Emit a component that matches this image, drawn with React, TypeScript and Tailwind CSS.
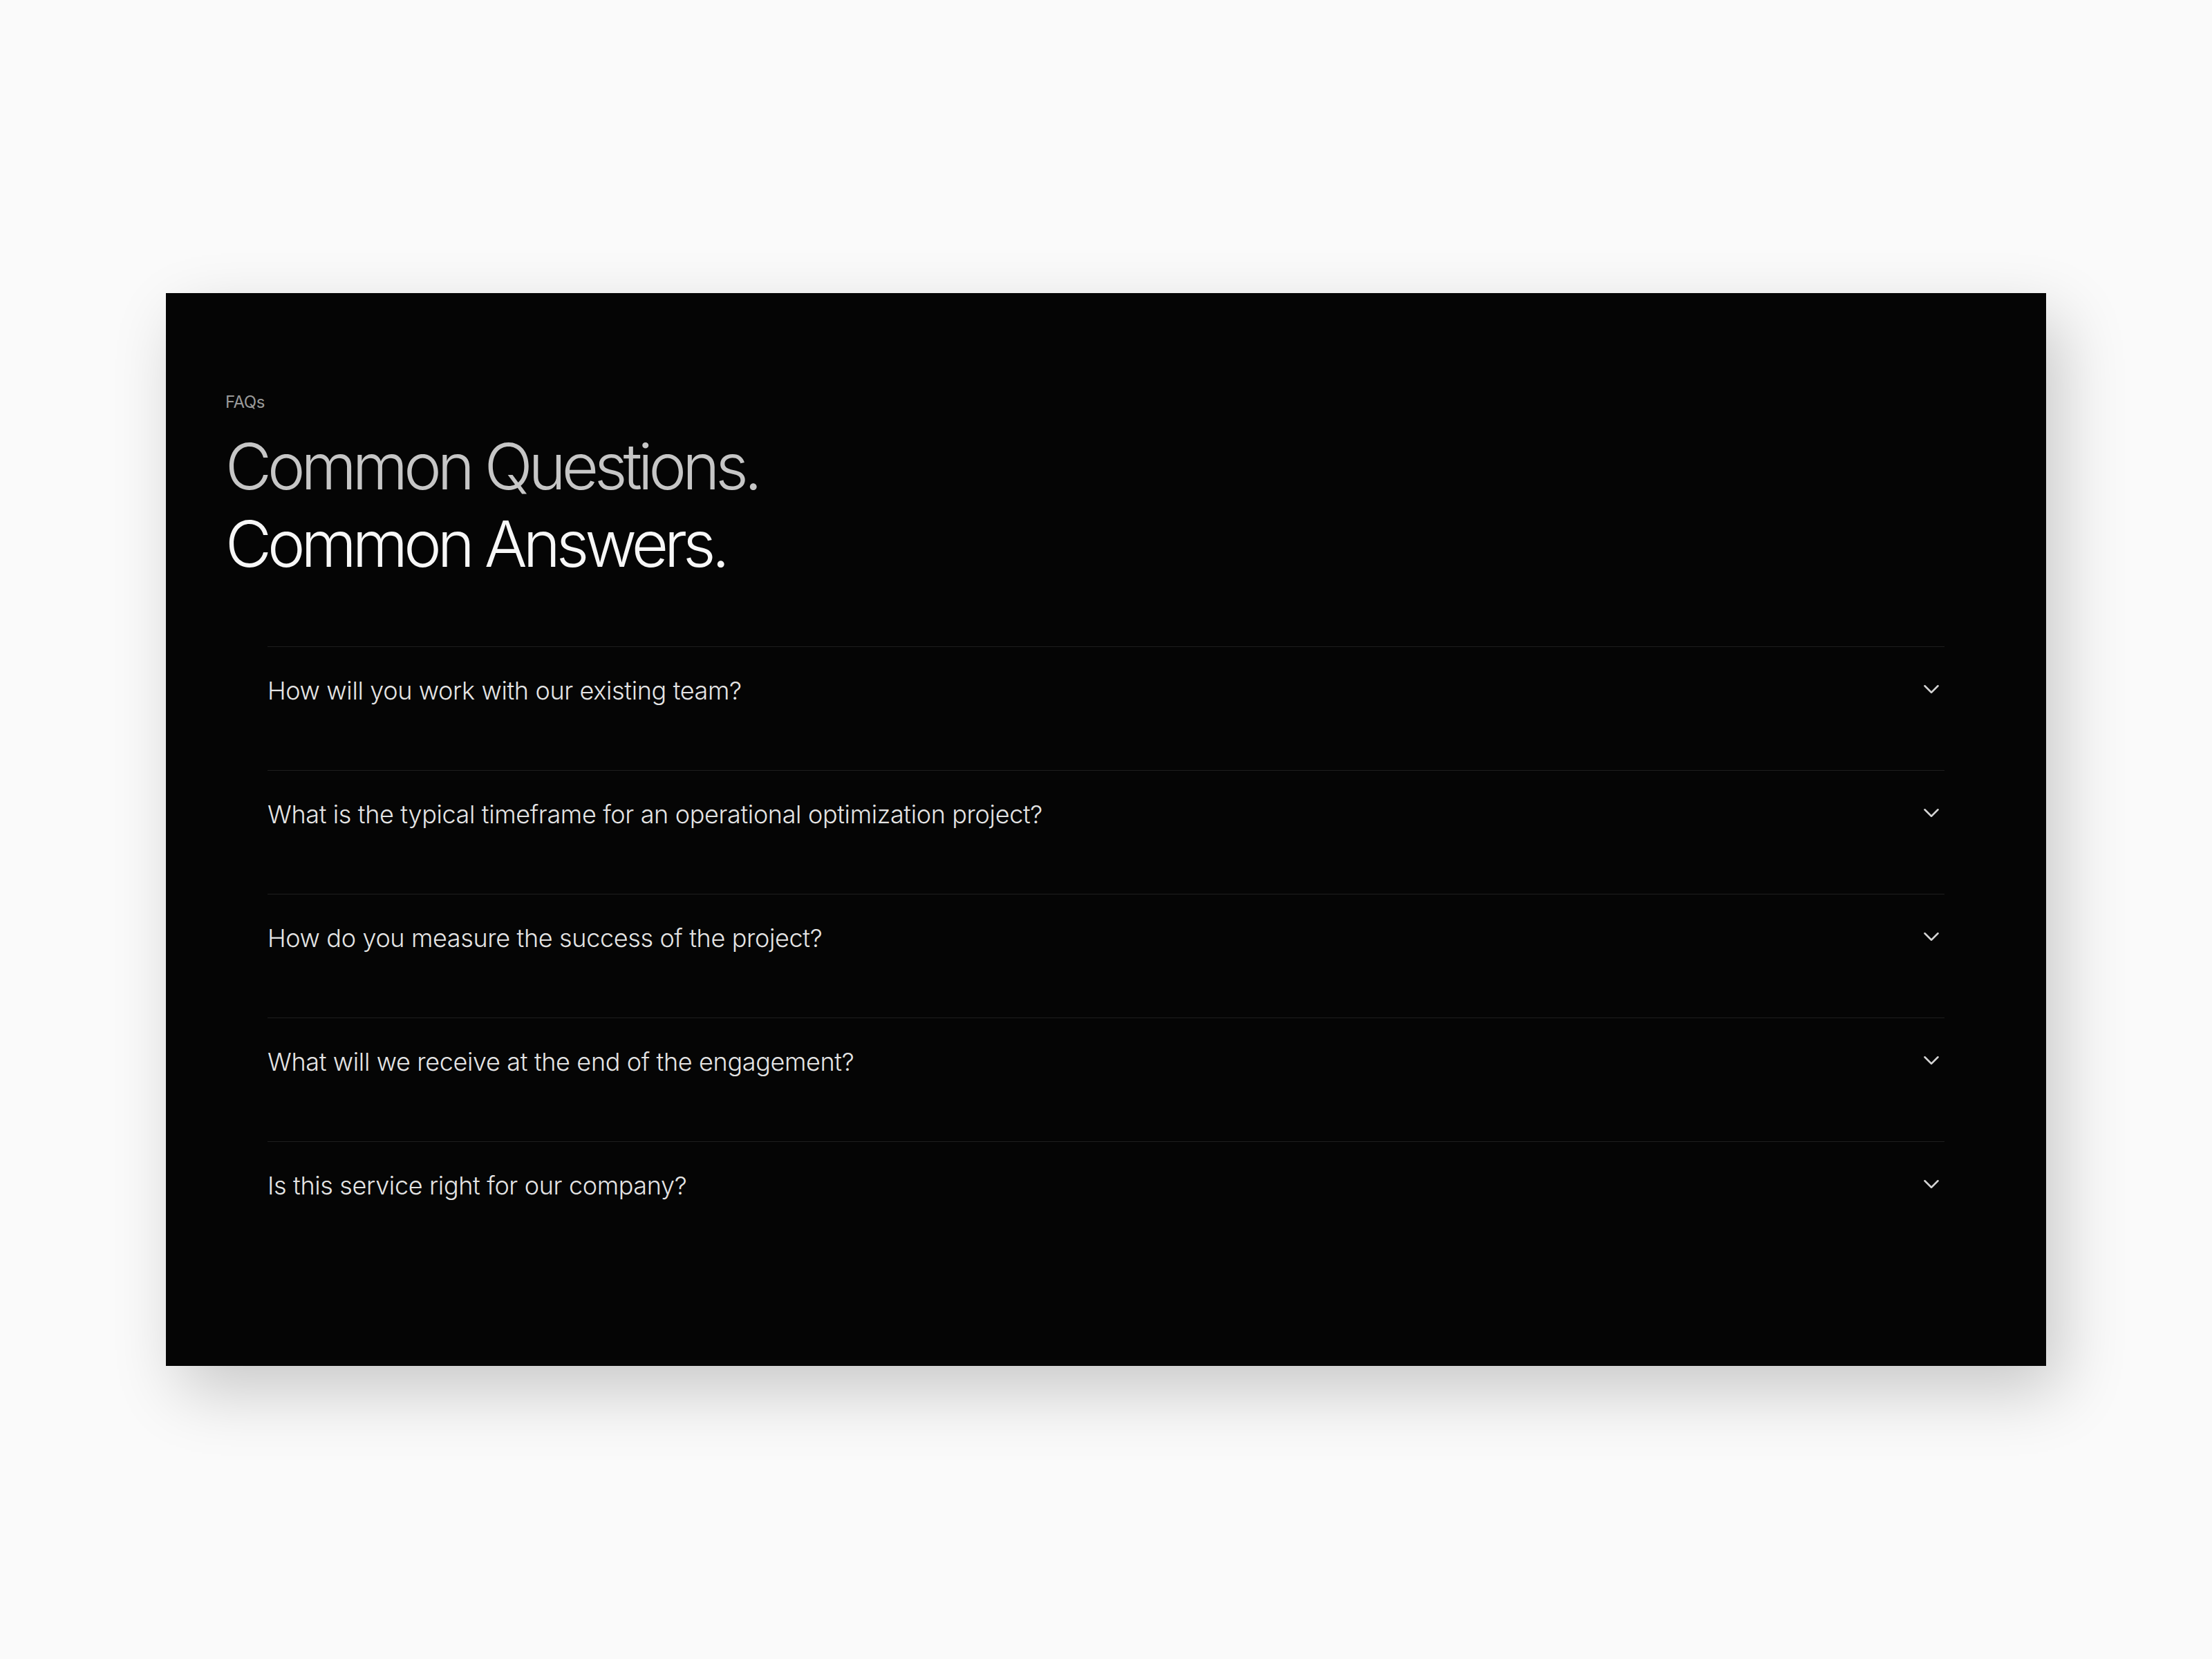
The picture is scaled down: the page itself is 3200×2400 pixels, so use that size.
import { ChevronDown } from 'lucide-react'

const questions = [
  'How will you work with our existing team?',
  'What is the typical timeframe for an operational optimization project?',
  'How do you measure the success of the project?',
  'What will we receive at the end of the engagement?',
  'Is this service right for our company?',
]

function FaqRow({ question }: { question: string }) {
  return (
    <div className="border-t border-[#1e1e1e]">
      <button className="flex w-full items-start justify-between pt-[38px] pb-[90px] text-left">
        <span className="text-[36px] leading-[50px] font-light tracking-[-0.01em] text-[#e4e4e4]">
          {question}
        </span>
        <ChevronDown size={38} strokeWidth={1.6} className="mt-[4px] shrink-0 text-[#d4d4d4]" />
      </button>
    </div>
  )
}

export default function App() {
  return (
    <div
      className="flex min-h-screen items-center justify-center bg-[#fafafa]"
      style={{ fontFamily: 'Inter, "Liberation Sans", sans-serif' }}
    >
      <section className="w-[2720px] bg-[#050505] px-[86px] pt-[140px] pb-[146px] shadow-[20px_36px_90px_rgba(0,0,0,0.2)]">
        <p className="text-[24px] leading-[36px] font-normal tracking-[-0.02em] text-[#9a9a9a]">FAQs</p>
        <h2 className="mt-[19px] text-[92px] leading-[112px] font-light tracking-[-0.065em]">
          <span className="block text-[#c6c6c6]">Common Questions.</span>
          <span className="block text-[#f7f7f7]">Common Answers.</span>
        </h2>
        <div className="mt-[92px] px-[61px]">
          {questions.map((q) => (
            <FaqRow key={q} question={q} />
          ))}
        </div>
      </section>
    </div>
  )
}
